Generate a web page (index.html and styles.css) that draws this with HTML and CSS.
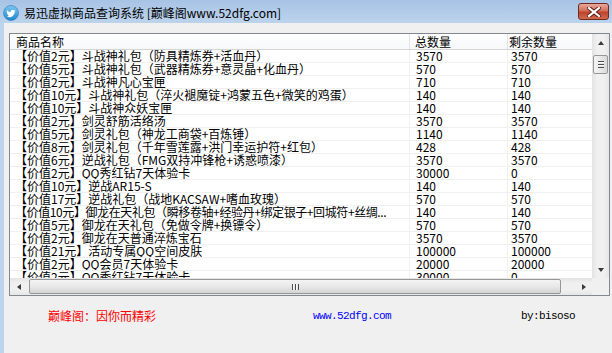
FILE: index.html
```html
<!DOCTYPE html>
<html lang="zh-CN">
<head>
  <meta charset="UTF-8" />
  <title>易迅虚拟商品查询系统 [巅峰阁www.52dfg.com]</title>
  <link rel="stylesheet" href="styles.css">
</head>
<body>
  <div class="window">
    <div class="titlebar">
      <svg class="app-icon" width="16" height="16" viewBox="0 0 16 16">
        <defs>
          <linearGradient id="ic" x1="0" y1="0" x2="0" y2="1">
            <stop offset="0" stop-color="#7cc8f2"/>
            <stop offset="1" stop-color="#1f86cf"/>
          </linearGradient>
        </defs>
        <circle cx="8" cy="8" r="7.5" fill="url(#ic)" stroke="#2a78b8" stroke-width="0.6"/>
        <path transform="translate(3.4 3.8) scale(0.38)" fill="#fff" d="M23.6 4.8c-.9.4-1.8.6-2.8.8 1-.6 1.8-1.5 2.1-2.7-.9.6-2 .9-3.1 1.2-.9-.9-2.2-1.5-3.6-1.5-2.7 0-4.9 2.2-4.9 4.9 0 .4 0 .8.1 1.1C7.7 8.4 4.1 6.5 1.7 3.5c-.4.7-.7 1.6-.7 2.5 0 1.7.9 3.2 2.2 4.1-.8 0-1.6-.2-2.2-.6v.1c0 2.4 1.7 4.4 3.9 4.8-.4.1-.8.2-1.3.2-.3 0-.6 0-.9-.1.6 2 2.4 3.4 4.6 3.4-1.7 1.3-3.8 2.1-6.1 2.1-.4 0-.8 0-1.2-.1 2.2 1.4 4.8 2.2 7.5 2.2 9.1 0 14-7.5 14-14v-.6c1-.7 1.8-1.6 2.5-2.5z"/>
      </svg>
      <span class="title">易迅虚拟商品查询系统 [巅峰阁www.52dfg.com]</span>
      <div class="close">
        <svg width="14" height="10" viewBox="0 0 14 10">
          <path d="M2 1 L12 9 M12 1 L2 9" stroke="#5a1a12" stroke-width="4" stroke-linecap="square"/>
          <path d="M2 1 L12 9 M12 1 L2 9" stroke="#fff" stroke-width="2.2" stroke-linecap="square"/>
        </svg>
      </div>
    </div>

    <div class="client">
      <div class="listview">
        <div class="view">
          <div class="row head">
            <div class="c1">商品名称</div>
            <div class="c2">总数量</div>
            <div class="c3">剩余数量</div>
          </div>
          <div class="row"><div class="c1">【价值2元】斗战神礼包（防具精炼券+活血丹）</div><div class="c2">3570</div><div class="c3">3570</div></div>
          <div class="row"><div class="c1">【价值5元】斗战神礼包（武器精炼券+意灵晶+化血丹）</div><div class="c2">570</div><div class="c3">570</div></div>
          <div class="row"><div class="c1">【价值2元】斗战神凡心宝匣</div><div class="c2">710</div><div class="c3">710</div></div>
          <div class="row"><div class="c1">【价值10元】斗战神礼包（淬火褪魔锭+鸿蒙五色+微笑的鸡蛋）</div><div class="c2">140</div><div class="c3">140</div></div>
          <div class="row"><div class="c1">【价值10元】斗战神众妖宝匣</div><div class="c2">140</div><div class="c3">140</div></div>
          <div class="row"><div class="c1">【价值2元】剑灵舒筋活络汤</div><div class="c2">3570</div><div class="c3">3570</div></div>
          <div class="row"><div class="c1">【价值5元】剑灵礼包（神龙工商袋+百炼锤）</div><div class="c2">1140</div><div class="c3">1140</div></div>
          <div class="row"><div class="c1">【价值8元】剑灵礼包（千年雪莲露+洪门幸运护符+红包）</div><div class="c2">428</div><div class="c3">428</div></div>
          <div class="row"><div class="c1">【价值6元】逆战礼包（FMG双持冲锋枪+诱惑喷漆）</div><div class="c2">3570</div><div class="c3">3570</div></div>
          <div class="row"><div class="c1">【价值2元】QQ秀红钻7天体验卡</div><div class="c2">30000</div><div class="c3">0</div></div>
          <div class="row"><div class="c1">【价值10元】逆战AR15-S</div><div class="c2">140</div><div class="c3">140</div></div>
          <div class="row"><div class="c1">【价值17元】逆战礼包（战地KACSAW+嗜血玫瑰）</div><div class="c2">570</div><div class="c3">570</div></div>
          <div class="row"><div class="c1 tight">【价值10元】御龙在天礼包（瞬移卷轴+经验丹+绑定银子+回城符+丝绸...</div><div class="c2">140</div><div class="c3">140</div></div>
          <div class="row"><div class="c1">【价值5元】御龙在天礼包（免做令牌+换镖令）</div><div class="c2">570</div><div class="c3">570</div></div>
          <div class="row"><div class="c1">【价值2元】御龙在天普通淬炼宝石</div><div class="c2">3570</div><div class="c3">3570</div></div>
          <div class="row"><div class="c1">【价值21元】活动专属QQ空间皮肤</div><div class="c2">100000</div><div class="c3">100000</div></div>
          <div class="row"><div class="c1">【价值2元】QQ会员7天体验卡</div><div class="c2">20000</div><div class="c3">20000</div></div>
          <div class="row"><div class="c1">【价值2元】QQ秀红钻7天体验卡</div><div class="c2">30000</div><div class="c3">0</div></div>
        </div>

        <div class="vscroll">
          <div class="sbtn"><span class="arr up"></span></div>
          <div class="vthumb"><span class="grip-h"></span></div>
          <div class="track"></div>
          <div class="sbtn"><span class="arr down"></span></div>
        </div>

        <div class="hscroll">
          <div class="sbtn"><span class="arr left"></span></div>
          <div class="hthumb"><span class="grip-v"></span></div>
          <div class="track"></div>
          <div class="sbtn"><span class="arr right"></span></div>
        </div>

        <div class="corner"></div>
      </div>

      <div class="footer">
        <span class="slogan">巅峰阁：因你而精彩</span>
        <span class="site">www.52dfg.com</span>
        <span class="author">by:bisoso</span>
      </div>
    </div>
  </div>
</body>
</html>
```

FILE: styles.css
```css
body {
  margin: 0;
  font-family: "Noto Sans CJK SC", "Liberation Sans", sans-serif;
  font-size: 12px;
  color: #000;
}
.window {
  width: 612px;
  height: 353px;
  background: #bed4ec;
  display: flex;
  flex-direction: column;
  overflow: hidden;
}
.titlebar {
  height: 23px;
  flex: none;
  display: flex;
  align-items: center;
  padding-left: 3px;
  background: linear-gradient(#a7c3e5, #bcd3ec);
}
.app-icon {
  margin-top: 2px;
}
.title {
  margin-left: 5px;
  line-height: 16px;
  margin-top: 3px;
}
.close {
  margin-left: auto;
  margin-right: 3px;
  width: 29px;
  height: 15px;
  border: 1px solid #6e2a20;
  border-radius: 3px;
  background: linear-gradient(#e9a99b, #d2705c 45%, #c0432b 55%, #cf6a4f);
  display: flex;
  align-items: center;
  justify-content: center;
}
.client {
  flex: 1;
  margin-left: 4px;
  background: #f0f0f0;
  padding: 10px 0 0 5px;
}
.listview {
  width: 601px;
  height: 263px;
  box-sizing: border-box;
  border: 1px solid #828790;
  background: #fff;
  display: grid;
  grid-template-columns: 582px 17px;
  grid-template-rows: 244px 17px;
}
.view {
  overflow: hidden;
}
.row {
  display: flex;
  height: 12px;
  line-height: 12px;
  border-bottom: 1px solid #f0f0f0;
  white-space: nowrap;
}
.row > div {
  flex: none;
  box-sizing: border-box;
  border-right: 1px solid #f0f0f0;
  overflow: hidden;
}
.c1 { width: 400px; padding-left: 5px; }
.c2 { width: 98px; padding-left: 6px; }
.c3 { width: 100px; padding-left: 3px; }
.tight { letter-spacing: -0.4px; }
.row.head {
  height: 15px;
  line-height: 15px;
  background: linear-gradient(#ffffff, #f7f8fa);
  border-bottom: 1px solid #d5d5d5;
}
.row.head > div {
  border-right-color: #e2e4e7;
}
.row.head .c1 { padding-left: 6px; }
.row.head .c2 { padding-left: 5px; }
.row.head .c3 { padding-left: 1px; }

.vscroll, .hscroll {
  display: flex;
}
.vscroll {
  flex-direction: column;
  grid-row: 1;
  grid-column: 2;
  background: linear-gradient(90deg, #e3e3e3, #f0f0f0 30%, #f0f0f0 70%, #e6e6e6);
}
.hscroll {
  grid-row: 2;
  grid-column: 1;
  background: linear-gradient(#e3e3e3, #f0f0f0 30%, #f0f0f0 70%, #e6e6e6);
}
.corner {
  background: #f0f0f0;
}
.sbtn {
  flex: none;
  width: 17px;
  height: 17px;
  display: flex;
  align-items: center;
  justify-content: center;
}
.track {
  flex: 1;
}
.arr {
  width: 0;
  height: 0;
  border: 3px solid transparent;
}
.arr.up { border-bottom: 4px solid #3b3b3b; border-top-width: 0; }
.arr.down { border-top: 4px solid #3b3b3b; border-bottom-width: 0; }
.arr.left { border-right: 4px solid #3b3b3b; border-left-width: 0; }
.arr.right { border-left: 4px solid #3b3b3b; border-right-width: 0; }

.vthumb, .hthumb {
  flex: none;
  box-sizing: border-box;
  border: 1px solid #979797;
  border-radius: 2px;
  display: flex;
  align-items: center;
  justify-content: center;
}
.vthumb {
  margin: 4px 1px 0 1px;
  height: 19px;
  background: linear-gradient(90deg, #f4f4f4, #e8e8e8 50%, #d9d9d9);
}
.hthumb {
  margin: 1px 0 1px 2px;
  width: 532px;
  background: linear-gradient(#f4f4f4, #e8e8e8 50%, #d4d4d4);
}
.grip-h {
  width: 6px;
  height: 7px;
  background: repeating-linear-gradient(#4e4e4e 0 1px, #fafafa 1px 2px, transparent 2px 3px);
}
.grip-v {
  width: 7px;
  height: 6px;
  background: repeating-linear-gradient(90deg, #4e4e4e 0 1px, #fafafa 1px 2px, transparent 2px 3px);
}

.footer {
  display: flex;
  padding-top: 12px;
  line-height: 16px;
}
.slogan {
  margin-left: 39px;
  color: #ff0000;
}
.site, .author {
  font-family: "Liberation Mono", monospace;
  font-size: 11px;
  letter-spacing: -0.6px;
}
.site {
  margin-left: 157px;
  color: #0000ff;
}
.author {
  margin-left: 130px;
}
```
